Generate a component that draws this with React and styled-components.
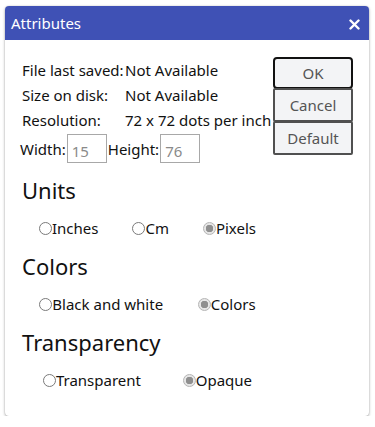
import styled, { createGlobalStyle } from 'styled-components';

const GlobalStyle = createGlobalStyle`
    body {
        margin: 0;
        background: #ffffff;
        font-family: "Noto Sans", "Open Sans", sans-serif;
        color: #111;
    }
`;

const info = [
    { label: 'File last saved:', value: 'Not Available' },
    { label: 'Size on disk:', value: 'Not Available' },
    { label: 'Resolution:', value: '72 x 72 dots per inch' },
];

const groups = [
    { title: 'Units', options: ['Inches', 'Cm', 'Pixels'], selected: 'Pixels' },
    { title: 'Colors', options: ['Black and white', 'Colors'], selected: 'Colors' },
    { title: 'Transparency', options: ['Transparent', 'Opaque'], selected: 'Opaque' },
];

function CloseIcon() {
    return (
        <svg width="11" height="11" viewBox="0 0 11 11">
            <path d="M1.5 1.5 L9.5 9.5 M9.5 1.5 L1.5 9.5" stroke="white" strokeWidth="2.4" strokeLinecap="round" />
        </svg>
    );
}

function App() {
    return (
        <>
            <GlobalStyle />
            <Dialog>
                <TitleBar>
                    <h3>Attributes</h3>
                    <CloseBtn><CloseIcon /></CloseBtn>
                </TitleBar>
                <Body>
                    <Top>
                        <Info>
                            {info.map(row => (
                                <InfoRow key={row.label}>
                                    <Label>{row.label}</Label>
                                    <Value>{row.value}</Value>
                                </InfoRow>
                            ))}
                            <SizeRow>
                                <span>Width:</span>
                                <SizeInput readOnly value="15" />
                                <span>Height:</span>
                                <SizeInput readOnly value="76" />
                            </SizeRow>
                        </Info>
                        <Buttons>
                            <DialogButton primary>OK</DialogButton>
                            <DialogButton>Cancel</DialogButton>
                            <DialogButton>Default</DialogButton>
                        </Buttons>
                    </Top>
                    {groups.map(group => (
                        <Section key={group.title}>
                            <Heading>{group.title}</Heading>
                            <RadioRow>
                                {group.options.map(opt => (
                                    <Option key={opt}>
                                        <Radio checked={opt === group.selected} />
                                        {opt}
                                    </Option>
                                ))}
                            </RadioRow>
                        </Section>
                    ))}
                </Body>
            </Dialog>
        </>
    );
}

const Dialog = styled.div`
    margin: 6px 0 0 5px;
    width: 364px;
    border-radius: 4px;
    overflow: hidden;
    background: #fff;
    box-shadow: 0 1px 3px rgba(0,0,0,0.35), 0 0 1px rgba(0,0,0,0.2);
`;

const TitleBar = styled.div`
    height: 34px;
    background: #3f51b5;
    display: flex;
    align-items: center;
    justify-content: space-between;
    padding: 0 9px 0 6px;

    h3 {
        margin: 0;
        color: #fff;
        font-size: 15px;
        font-weight: 400;
    }
`;

const CloseBtn = styled.div`
    display: flex;
    margin-top: 2px;
    cursor: pointer;
`;

const Body = styled.div`
    padding: 17px 0 16px 15px;
`;

const Top = styled.div`
    display: flex;
    align-items: flex-start;
    margin-bottom: 7px;
`;

const Info = styled.div`
    width: 253px;
    font-size: 15px;
`;

const InfoRow = styled.div`
    display: flex;
    align-items: center;
    height: 25px;
    padding-left: 2px;
    white-space: nowrap;
`;

const Label = styled.span`
    width: 103px;
    flex-shrink: 0;
`;

const Value = styled.span``;

const SizeRow = styled.div`
    display: flex;
    align-items: center;
    height: 33px;
`;

const SizeInput = styled.input`
    box-sizing: border-box;
    width: 40px;
    height: 29px;
    margin: 0 1px;
    padding: 5px 0 0 4px;
    border: 1px solid #a8a8a8;
    font-family: inherit;
    font-size: 15px;
    color: #8a8a8a;
    outline: none;
`;

const Buttons = styled.div`
    display: flex;
    flex-direction: column;
    width: 80px;
`;

const DialogButton = styled.div`
    box-sizing: border-box;
    height: ${({ primary }) => (primary ? '32px' : '34px')};
    margin-top: ${({ primary }) => (primary ? '0' : '-1px')};
    display: flex;
    align-items: center;
    justify-content: center;
    background: #f3f4f6;
    border: 2px solid ${({ primary }) => (primary ? '#111' : '#505050')};
    border-radius: ${({ primary }) => (primary ? '4px' : '2px')};
    font-size: 15px;
    color: #555;
    cursor: pointer;
`;

const Section = styled.div`
    padding-left: 2px;
`;

const Heading = styled.div`
    height: 36px;
    display: flex;
    align-items: center;
    font-size: 22px;
`;

const RadioRow = styled.div`
    width: 251px;
    height: 40px;
    display: flex;
    align-items: center;
    justify-content: space-around;
    font-size: 15px;
`;

const Option = styled.label`
    display: flex;
    align-items: center;
    white-space: nowrap;
`;

const Radio = styled.span`
    box-sizing: border-box;
    width: 13px;
    height: 13px;
    border-radius: 50%;
    border: 1px solid ${({ checked }) => (checked ? '#b5b5b5' : '#7a7a7a')};
    background: ${({ checked }) => (checked ? 'radial-gradient(circle, #8f8f8f 0 3.5px, #e6e6e6 4px)' : '#fff')};
`;

export default App;
